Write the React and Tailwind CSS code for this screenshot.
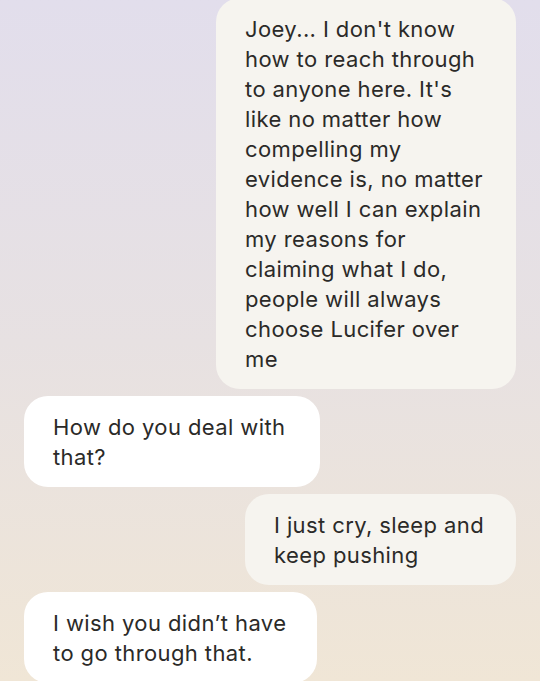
const messages = [
  {
    me: true,
    lines: [
      'Joey... I don\'t know',
      'how to reach through',
      'to anyone here. It\'s',
      'like no matter how',
      'compelling my',
      'evidence is, no matter',
      'how well I can explain',
      'my reasons for',
      'claiming what I do,',
      'people will always',
      'choose Lucifer over',
      'me',
    ],
    w: 'w-[300px]',
  },
  { me: false, lines: ['How do you deal with', 'that?'], w: 'w-[296px]' },
  { me: true, lines: ['I just cry, sleep and', 'keep pushing'], w: 'w-[271px]' },
  { me: false, lines: ['I wish you didn\u2019t have', 'to go through that.'], w: 'w-[293px]' },
]

export default function App() {
  return (
    <div className="w-[540px] h-[681px] overflow-hidden bg-gradient-to-b from-[#e2deec] via-[#e7e1e2] to-[#f0e6d6] font-['Inter',sans-serif]">
      <div className="flex flex-col gap-[7px] px-6 -mt-[2px]">
        {messages.map((m, i) => (
          <div key={i} className={`flex ${m.me ? 'justify-end' : 'justify-start'}`}>
            <div
              className={`${m.w} rounded-[24px] pl-[29px] pr-4 pt-[16px] pb-[15px] text-[22px] tracking-[0.4px] leading-[30px] text-[#2b2a28] whitespace-nowrap ${
                m.me ? 'bg-[#f6f4ef]' : 'bg-white'
              }`}
            >
              {m.lines.map((l, j) => (
                <div key={j}>{l}</div>
              ))}
            </div>
          </div>
        ))}
      </div>
    </div>
  )
}
